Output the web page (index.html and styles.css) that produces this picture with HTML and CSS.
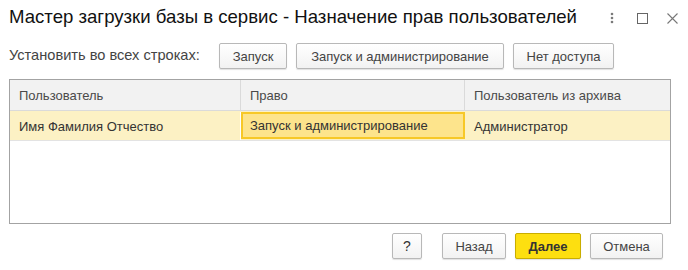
FILE: index.html
```html
<!DOCTYPE html>
<html lang="ru">
<head>
<meta charset="utf-8">
<title>Мастер загрузки базы в сервис</title>
<link rel="stylesheet" href="styles.css">
</head>
<body>
<div class="window">
  <div class="titlebar">
    <div class="title">Мастер загрузки базы в сервис - Назначение прав пользователей</div>
    <div class="controls">
      <svg class="ic-dots" width="4" height="12" viewBox="0 0 4 12"><circle cx="2" cy="2" r="1.3"/><circle cx="2" cy="6" r="1.3"/><circle cx="2" cy="10" r="1.3"/></svg>
      <svg class="ic-max" width="11" height="11" viewBox="0 0 11 11"><rect x="0.5" y="0.5" width="10" height="10"/></svg>
      <svg class="ic-close" width="11" height="11" viewBox="0 0 11 11"><path d="M0.5 0.5L10.5 10.5M10.5 0.5L0.5 10.5"/></svg>
    </div>
  </div>
  <div class="toolbar">
    <span class="label">Установить во всех строках:</span>
    <button class="btn w-run">Запуск</button>
    <button class="btn w-admin">Запуск и администрирование</button>
    <button class="btn w-none">Нет доступа</button>
  </div>
  <div class="grid">
    <div class="row head">
      <div class="cell c1">Пользователь</div>
      <div class="cell c2">Право</div>
      <div class="cell c3">Пользователь из архива</div>
    </div>
    <div class="row sel">
      <div class="cell c1">Имя Фамилия Отчество</div>
      <div class="cell c2 current">Запуск и администрирование</div>
      <div class="cell c3">Администратор</div>
    </div>
  </div>
  <div class="footer">
    <button class="btn w-help">?</button>
    <button class="btn w-back">Назад</button>
    <button class="btn primary w-next">Далее</button>
    <button class="btn w-cancel">Отмена</button>
  </div>
</div>
</body>
</html>
```
FILE: styles.css
```css
* { box-sizing: border-box; }
html, body { margin: 0; padding: 0; background: #fff; }
body {
  font-family: "Liberation Sans", Arial, sans-serif;
  font-size: 13px;
  color: #333;
  width: 688px;
  height: 270px;
  overflow: hidden;
}
.window { padding: 0 17px 0 9px; }
.titlebar {
  display: flex;
  align-items: flex-start;
  height: 43px;
  padding-top: 5px;
}
.title {
  flex: 1;
  font-size: 18.6px;
  line-height: 23px;
  color: #111;
  white-space: nowrap;
}
.controls {
  display: flex;
  align-items: center;
  padding-top: 7px;
  margin-right: -7px;
}
.ic-dots { fill: #7a7a7a; margin-right: 23px; }
.ic-max { fill: none; stroke: #666; stroke-width: 1; margin-right: 19px; }
.ic-close { fill: none; stroke: #777; stroke-width: 1.1; }
.toolbar {
  display: flex;
  align-items: center;
  height: 26px;
}
.label {
  color: #444;
  font-size: 14.6px;
  margin-right: 19px;
  white-space: nowrap;
  width: 191px;
  padding-bottom: 2px;
}
.toolbar .btn { margin-right: 9px; }
.btn {
  height: 26px;
  padding: 0;
  font-family: inherit;
  font-size: 13px;
  color: #444;
  background: linear-gradient(#ffffff, #f2f2f2);
  border: 1px solid #b8b8b8;
  border-radius: 2px;
  box-shadow: 0 1px 1px rgba(0,0,0,0.12);
  white-space: nowrap;
}
.w-run { width: 68px; }
.w-admin { width: 208px; }
.w-none { width: 101px; }
.grid {
  margin-top: 10px;
  height: 145px;
  border: 1px solid #a3a3a3;
}
.row { display: flex; }
.cell {
  display: flex;
  align-items: center;
  padding-left: 9px;
  white-space: nowrap;
}
.c1 { width: 231px; }
.c2 { width: 224px; }
.c3 { flex: 1; }
.head { height: 31px; background: #f2f2f2; border-bottom: 1px solid #dadada; color: #4a4a4a; }
.head .cell { border-right: 1px solid #dadada; }
.head .c3 { border-right: none; }
.sel { height: 30px; background: #fcf1c4; border-bottom: 1px solid #e3e3e3; padding-top: 1px; }
.sel .c1 { border-right: 1px solid #fff; }
.sel .c2 { border-right: 1px solid #fff; }
.current {
  background: #fde48c;
  border: 2px solid #f7c827 !important;
  padding-left: 7px;
  height: 27px;
  color: #333;
}
.footer {
  display: flex;
  justify-content: flex-end;
  margin-top: 9px;
  margin-right: 8px;
}
.footer .btn { margin-left: 9px; height: 26px; }
.w-help { width: 30px; margin-right: 11px; font-size: 14px; color: #333; }
.w-back { width: 64px; }
.w-next { width: 66px; }
.w-cancel { width: 73px; }
.primary {
  background: #fddf10;
  border-color: #c9ad00;
  color: #333;
  font-weight: bold;
}
```
